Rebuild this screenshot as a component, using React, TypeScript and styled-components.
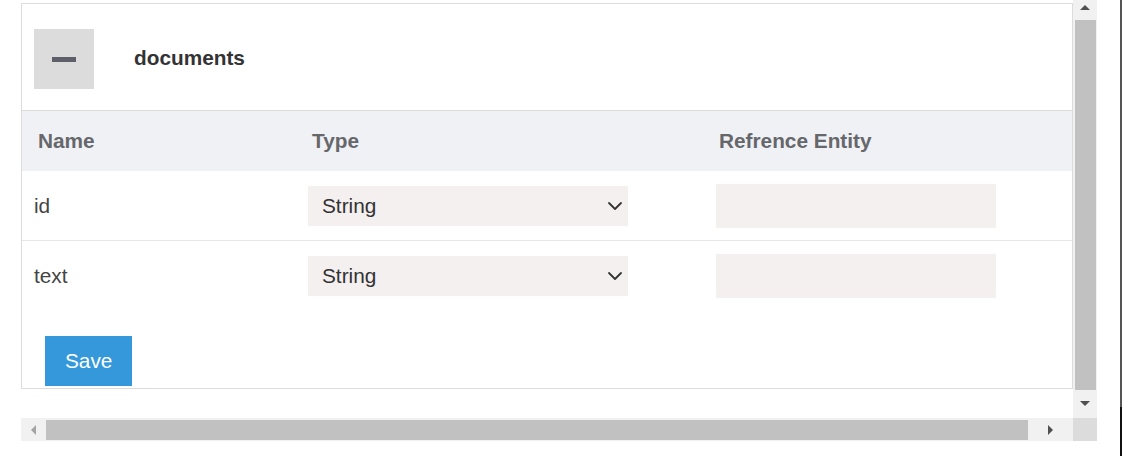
import React from "react";
import styled, { createGlobalStyle } from "styled-components";
import { ChevronDown } from "lucide-react";

const GlobalStyle = createGlobalStyle`
    body {
        margin: 0;
        background: #fff;
        font-family: "Liberation Sans", Arial, sans-serif;
    }
`

const Page = styled.div`
    display: grid;
    grid-template-columns: 21px 1076px 22px 3px;
    width: 1122px;
    height: 456px;
    overflow: hidden;
`

const Edge = styled.div`
    grid-column: 4;
    height: 456px;
    background: linear-gradient(90deg, #fff 0 1px, transparent 1px),
        linear-gradient(#555 0 407px, #111 407px);
`

const Frame = styled.div`
    grid-column: 2;
    display: grid;
    grid-template-columns: 1052px 24px;
    grid-template-rows: 418px 23px;
    align-self: start;
`

const Viewport = styled.div`
    padding-top: 3px;
    overflow: hidden;
`

const Panel = styled.section`
    border: 1px solid #dcdcdc;
    background: #fff;
`

const PanelHead = styled.div`
    display: flex;
    align-items: center;
    gap: 40px;
    padding: 25px 12px 21px;
`

const Toggle = styled.button`
    width: 60px;
    height: 60px;
    border: none;
    background: #dcdcdc;
    display: flex;
    align-items: center;
    justify-content: center;
    padding: 0;
    &::before {
        content: "";
        width: 24px;
        height: 5px;
        background: #5f5f69;
    }
`

const PanelTitle = styled.h2`
    margin: 0 0 2px;
    font-size: 20.8px;
    font-weight: 700;
    color: #333;
`

const HeadRow = styled.div`
    display: grid;
    grid-template-columns: 274px 407px 1fr;
    align-items: center;
    height: 60px;
    border-top: 1px solid #dcdcdc;
    background: #f0f1f5;
`

const Row = styled.div`
    display: grid;
    grid-template-columns: 274px 407px 1fr;
    align-items: center;
    height: 69px;
    & + & {
        border-top: 1px solid #e6e6e6;
    }
`

const HeadCell = styled.div`
    padding-left: 16px;
    font-size: 20.8px;
    font-weight: 700;
    color: #66676b;
`

const Cell = styled.div`
    padding-left: 12px;
    font-size: 20.8px;
    color: #444;
`

const SelectWrap = styled.div`
    position: relative;
    width: 320px;
    height: 40px;
`

const Select = styled.select`
    appearance: none;
    width: 100%;
    height: 100%;
    border: none;
    outline: none;
    background: #f4f0f0;
    padding: 0 0 0 14px;
    font-family: inherit;
    font-size: 20.8px;
    color: #333;
`

const Chevron = styled(ChevronDown)`
    position: absolute;
    right: 1px;
    top: 8px;
    color: #333;
    pointer-events: none;
`

const Input = styled.input`
    width: 280px;
    height: 44px;
    border: none;
    outline: none;
    background: #f4f0f0;
    box-sizing: border-box;
    margin-left: 1px;
`

const Footer = styled.div`
    padding: 26px 23px 2px;
`

const SaveButton = styled.button`
    height: 50px;
    padding: 0 20px;
    border: none;
    background: #3498db;
    color: #fff;
    font-family: inherit;
    font-size: 20.8px;
    display: block;
`

const VBar = styled.div`
    background: #f1f1f1;
    display: grid;
    grid-template-rows: 20px 1fr 28px;
    justify-items: center;
`

const Arrow = styled.div<{ $dir: 'up' | 'down' | 'left' | 'right' }>`
    align-self: center;
    width: 0;
    height: 0;
    border: 5.5px solid transparent;
    ${p => p.$dir === 'up' && 'border-bottom: 5px solid #505050; border-top-width: 0; margin-top: -6px;'}
    ${p => p.$dir === 'down' && 'border-top: 5px solid #505050; border-bottom-width: 0; margin-top: -2px;'}
    ${p => p.$dir === 'left' && 'border-right: 5px solid #a3a3a3; border-left-width: 0;'}
    ${p => p.$dir === 'right' && 'border-left: 5px solid #505050; border-right-width: 0;'}
`

const VThumb = styled.div`
    width: 21px;
    margin-left: 1px;
    background: #c1c1c1;
`

const HBar = styled.div`
    background: #f1f1f1;
    display: grid;
    grid-template-columns: 25px 982px 1fr;
    align-items: stretch;
    justify-items: center;
`

const HThumb = styled.div`
    width: 100%;
    margin: 2px 0 1px;
    background: #c1c1c1;
`

const Corner = styled.div`
    background: #dcdcdc;
`

const fields = [
    { name: 'id', type: 'String' },
    { name: 'text', type: 'String' },
]

export default function App() {
    return (
        <Page>
            <GlobalStyle />
            <Frame>
                <Viewport>
                    <Panel>
                        <PanelHead>
                            <Toggle aria-label="collapse" />
                            <PanelTitle>documents</PanelTitle>
                        </PanelHead>
                        <HeadRow>
                            <HeadCell>Name</HeadCell>
                            <HeadCell>Type</HeadCell>
                            <HeadCell>Refrence Entity</HeadCell>
                        </HeadRow>
                        {fields.map(f => (
                            <Row key={f.name}>
                                <Cell>{f.name}</Cell>
                                <Cell>
                                    <SelectWrap>
                                        <Select defaultValue={f.type}>
                                            <option>String</option>
                                            <option>Number</option>
                                            <option>Boolean</option>
                                        </Select>
                                        <Chevron size={24} strokeWidth={1.8} />
                                    </SelectWrap>
                                </Cell>
                                <Cell>
                                    <Input />
                                </Cell>
                            </Row>
                        ))}
                        <Footer>
                            <SaveButton>Save</SaveButton>
                        </Footer>
                    </Panel>
                </Viewport>
                <VBar>
                    <Arrow $dir="up" />
                    <VThumb />
                    <Arrow $dir="down" />
                </VBar>
                <HBar>
                    <Arrow $dir="left" />
                    <HThumb />
                    <Arrow $dir="right" />
                </HBar>
                <Corner />
            </Frame>
            <Edge />
        </Page>
    )
}
